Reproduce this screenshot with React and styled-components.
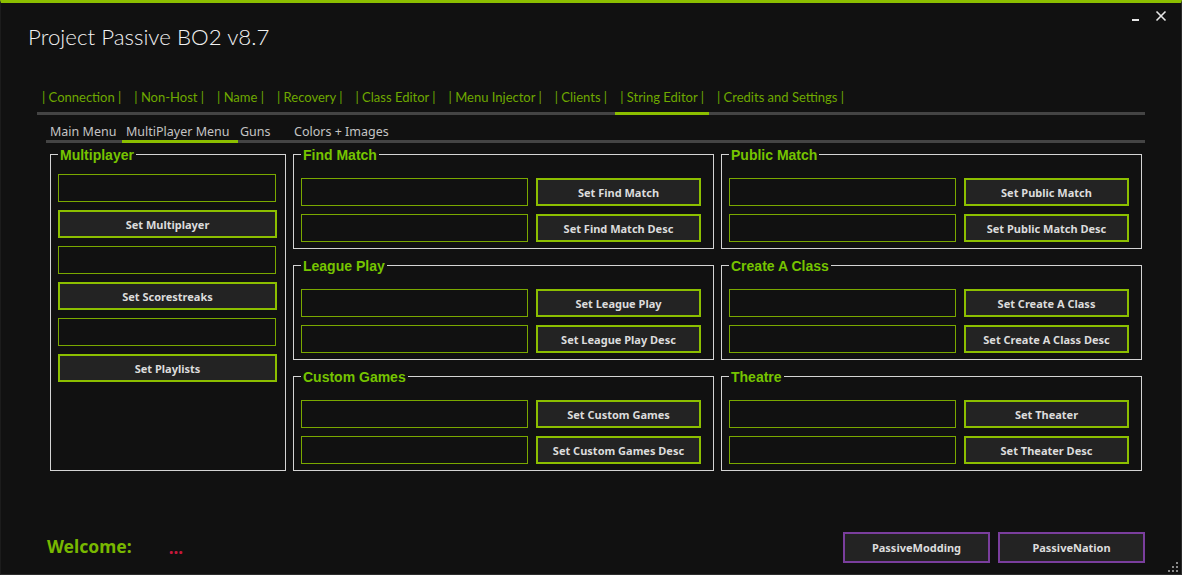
import React from "react";
import styled, { createGlobalStyle } from "styled-components";

const GREEN = "#8cbf00";
const TAB_GREEN = "#6ea800";
const TITLE_GREEN = "#76c400";

const Global = createGlobalStyle`
  html, body { margin: 0; padding: 0; background: #111111; }
  * { box-sizing: border-box; }
`;

const Window = styled.div`
  position: relative;
  width: 1182px;
  height: 575px;
  background: #111111;
  border-top: 3px solid ${GREEN};
  border-left: 1px solid #1c1c1c;
  border-right: 1px solid #2c2c2c;
  border-bottom: 1px solid #2c2c2c;
  display: flex;
  flex-direction: column;
  overflow: hidden;
`;

const TitleBar = styled.div`
  height: 62px;
  padding: 19px 0 0 27px;
`;

const Title = styled.div`
  font-family: Lato, "Noto Sans", sans-serif;
  font-weight: 300;
  font-size: 22.3px;
  line-height: 30px;
  color: #f2f2f2;
`;

const Controls = styled.div`
  position: absolute;
  top: 5px;
  right: 14px;
  display: flex;
  align-items: flex-end;
  gap: 15px;
`;

const TabBar = styled.div`
  margin: 24px 0 0 36px;
  width: 1108px;
  display: flex;
  gap: 3px;
  border-bottom: 3px solid #444444;
`;

const Tab = styled.div`
  padding: 0 5px 7px;
  margin-bottom: -3px;
  border-bottom: 3px solid ${(p) => (p.$active ? GREEN : "transparent")};
  font-family: Lato, "Noto Sans", sans-serif;
  font-size: 13px;
  line-height: 16px;
  color: ${TAB_GREEN};
  white-space: pre;
`;

const SubTabBar = styled.div`
  margin: 9px 0 0 45px;
  width: 1099px;
  display: flex;
  border-bottom: 3px solid #444444;
`;

const SubTab = styled.div`
  width: ${(p) => p.$w};
  padding-left: ${(p) => p.$pl || "4px"};
  margin-bottom: -3px;
  border-bottom: 3px solid ${(p) => (p.$active ? GREEN : "transparent")};
  font-family: "Noto Sans", sans-serif;
  font-size: 12.5px;
  line-height: 16px;
  color: #c4c4c4;
  white-space: nowrap;
`;

const Grid = styled.div`
  margin: 11px 0 0 49px;
  display: grid;
  grid-template-columns: 236px 421px 421px;
  grid-template-rows: 95px 95px 95px;
  column-gap: 7px;
  row-gap: 16px;
`;

const Group = styled.div`
  grid-row: ${(p) => p.$rows || "auto"};
  border: 1px solid #d4d4d4;
  padding: 0 7px;
  display: flex;
  flex-direction: column;
`;

const GroupTitle = styled.div`
  align-self: flex-start;
  margin-top: -8px;
  padding: 0 2px;
  background: #111111;
  font-family: "Liberation Sans", Arial, sans-serif;
  font-weight: 700;
  font-size: 14px;
  line-height: 16px;
  color: ${TITLE_GREEN};
`;

const Stack = styled.div`
  margin-top: ${(p) => p.$top};
  display: flex;
  flex-direction: column;
  gap: 8px;
`;

const Row = styled.div`
  display: flex;
  gap: 8px;
`;

const TextBox = styled.input`
  width: ${(p) => p.$w};
  height: 28px;
  margin: 0;
  padding: 0 4px;
  border: 1px solid #7aa800;
  background: #111111;
  color: #ddd;
  outline: none;
`;

const ActionButton = styled.button`
  width: ${(p) => p.$w};
  height: 28px;
  margin: 0;
  padding: 0;
  border: 2px solid ${GREEN};
  background: #232323;
  color: #dcdcdc;
  font-family: "Noto Sans", sans-serif;
  font-weight: 700;
  font-size: 11px;
  cursor: pointer;
`;

const Footer = styled.div`
  margin-top: auto;
  padding: 0 36px 11px 46px;
  display: flex;
  align-items: center;
`;

const Welcome = styled.span`
  margin-bottom: 4px;
  font-family: "Noto Sans", sans-serif;
  font-weight: 700;
  font-size: 17.5px;
  line-height: 24px;
  color: #78b800;
`;

const Dots = styled.span`
  margin: 0 0 0 37px;
  font-family: "Noto Sans", sans-serif;
  font-weight: 700;
  font-size: 17px;
  line-height: 24px;
  color: #c8183c;
`;

const LinkButtons = styled.div`
  margin-left: auto;
  display: flex;
  gap: 8px;
`;

const LinkButton = styled.button`
  width: 147px;
  height: 31px;
  margin: 0;
  border: 2px solid #7a3e9d;
  background: #232323;
  color: #dcdcdc;
  font-family: "Noto Sans", sans-serif;
  font-weight: 700;
  font-size: 11px;
  cursor: pointer;
`;

const Grip = styled.svg`
  position: absolute;
  right: 2px;
  bottom: 1px;
`;

const tabs = [
  "Connection",
  "Non-Host",
  "Name",
  "Recovery",
  "Class Editor",
  "Menu Injector",
  "Clients",
  "String Editor",
  "Credits and Settings",
];

const subTabs = [
  { label: "Main Menu", w: "76px" },
  { label: "MultiPlayer Menu", w: "116px", active: true },
  { label: "Guns", w: "52px", pl: "2px" },
  { label: "Colors + Images", w: "110px" },
];

const groups = [
  { title: "Find Match", a: "Set Find Match", b: "Set Find Match Desc" },
  { title: "Public Match", a: "Set Public Match", b: "Set Public Match Desc" },
  { title: "League Play", a: "Set League Play", b: "Set League Play Desc" },
  { title: "Create A Class", a: "Set Create A Class", b: "Set Create A Class Desc" },
  { title: "Custom Games", a: "Set Custom Games", b: "Set Custom Games Desc" },
  { title: "Theatre", a: "Set Theater", b: "Set Theater Desc" },
];

function PairGroup({ title, a, b }) {
  return (
    <Group>
      <GroupTitle>{title}</GroupTitle>
      <Stack $top="15px">
        <Row>
          <TextBox $w="227px" />
          <ActionButton $w="165px">{a}</ActionButton>
        </Row>
        <Row>
          <TextBox $w="227px" />
          <ActionButton $w="165px">{b}</ActionButton>
        </Row>
      </Stack>
    </Group>
  );
}

export default function App() {
  return (
    <>
      <Global />
      <Window>
        <TitleBar>
          <Title>Project Passive BO2 v8.7</Title>
        </TitleBar>
        <Controls>
          <svg width="9" height="14" viewBox="0 0 9 14">
            <line x1="1" y1="12" x2="8" y2="12" stroke="#e6e6e6" strokeWidth="2" />
          </svg>
          <svg width="12" height="12" viewBox="0 0 12 12">
            <line x1="1.5" y1="1.5" x2="10.5" y2="10.5" stroke="#e6e6e6" strokeWidth="1.6" />
            <line x1="10.5" y1="1.5" x2="1.5" y2="10.5" stroke="#e6e6e6" strokeWidth="1.6" />
          </svg>
        </Controls>

        <TabBar>
          {tabs.map((t) => (
            <Tab key={t} $active={t === "String Editor"}>{`| ${t} |`}</Tab>
          ))}
        </TabBar>

        <SubTabBar>
          {subTabs.map((s) => (
            <SubTab key={s.label} $w={s.w} $pl={s.pl} $active={s.active}>
              {s.label}
            </SubTab>
          ))}
        </SubTabBar>

        <Grid>
          <Group $rows="1 / span 3">
            <GroupTitle>Multiplayer</GroupTitle>
            <Stack $top="11px">
              <TextBox $w="218px" />
              <ActionButton $w="219px">Set Multiplayer</ActionButton>
              <TextBox $w="218px" />
              <ActionButton $w="219px">Set Scorestreaks</ActionButton>
              <TextBox $w="218px" />
              <ActionButton $w="219px">Set Playlists</ActionButton>
            </Stack>
          </Group>
          {groups.map((g) => (
            <PairGroup key={g.title} {...g} />
          ))}
        </Grid>

        <Footer>
          <Welcome>Welcome:</Welcome>
          <Dots>...</Dots>
          <LinkButtons>
            <LinkButton>PassiveModding</LinkButton>
            <LinkButton>PassiveNation</LinkButton>
          </LinkButtons>
        </Footer>

        <Grip width="12" height="12" viewBox="0 0 12 12">
          {[
            [9, 1],
            [9, 5],
            [5, 5],
            [9, 9],
            [5, 9],
            [1, 9],
          ].map(([x, y]) => (
            <rect key={`${x}-${y}`} x={x} y={y} width="2" height="2" fill="#8a8a8a" />
          ))}
        </Grip>
      </Window>
    </>
  );
}
